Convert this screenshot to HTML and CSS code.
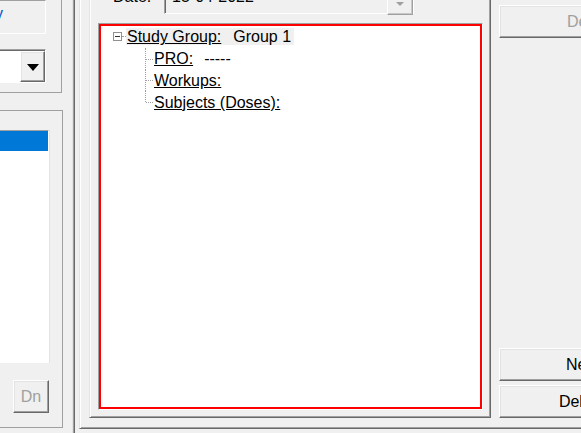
FILE: index.html
```html
<!DOCTYPE html>
<html>
<head>
<meta charset="utf-8">
<title>Study Group</title>
<link rel="stylesheet" href="styles.css">
</head>
<body>
<div class="window">
  <div class="left-pane">
    <div class="group group-top">
      <div class="static"><span class="static-text">y</span></div>
      <div class="combo">
        <div class="combo-field"></div>
        <div class="combo-btn"><span class="arrow-black"></span></div>
      </div>
    </div>
    <div class="group group-list">
      <div class="listbox">
        <div class="list-item selected"></div>
      </div>
      <button class="btn btn-dn" disabled>Dn</button>
    </div>
  </div>
  <div class="splitter"></div>
  <div class="outer-panel">
    <div class="inner-panel">
      <div class="date-row">
        <span class="date-label">Date:</span>
        <div class="date-box">
          <span class="date-value">15-04-2022</span>
          <span class="date-btn"><span class="arrow-gray"></span></span>
        </div>
      </div>
      <div class="tree-frame">
        <div class="tree">
          <div class="tree-row root">
            <span class="expander"></span>
            <span class="h-connector"></span>
            <span class="node selected"><span class="key">Study Group:</span><span class="val">Group 1</span></span>
          </div>
          <div class="tree-row child">
            <span class="branch"></span>
            <span class="node"><span class="key">PRO:</span><span class="val val-child">-----</span></span>
          </div>
          <div class="tree-row child">
            <span class="branch"></span>
            <span class="node"><span class="key">Workups:</span></span>
          </div>
          <div class="tree-row child last">
            <span class="branch"></span>
            <span class="node"><span class="key">Subjects (Doses):</span></span>
          </div>
        </div>
      </div>
    </div>
    <div class="right-col">
      <button class="btn btn-side btn-first" disabled>Details</button>
      <button class="btn btn-side btn-new">New</button>
      <button class="btn btn-side btn-del">Delete</button>
    </div>
  </div>
</div>
</body>
</html>
```
FILE: styles.css
```css
* { box-sizing: border-box; }

html, body {
  margin: 0;
  padding: 0;
  background: #f0f0f0;
  overflow: hidden;
}

body {
  width: 581px;
  height: 433px;
  font-family: "Liberation Sans", Arial, sans-serif;
  font-size: 16px;
  color: #000;
}

.window {
  display: flex;
  align-items: flex-start;
  width: 900px;
  height: 433px;
}

/* ---------- left pane ---------- */
.left-pane {
  width: 72px;
  flex-shrink: 0;
  display: flex;
  flex-direction: column;
}

.group {
  border-color: #a0a0a0;
  border-style: solid;
  border-width: 0;
}

.group-top {
  width: 62px;
  height: 93px;
  border-right-width: 1px;
  border-bottom-width: 1px;
  display: flex;
  flex-direction: column;
}

.static {
  width: 46px;
  height: 34px;
  border-top: 1px solid #a0a0a0;
  border-right: 1px solid #fff;
  border-bottom: 1px solid #fff;
  overflow: hidden;
  padding-top: 4px;
  line-height: 18px;
}

.static-text {
  display: inline-block;
  margin-left: -5px;
  color: #0055cc;
}

.combo {
  margin-top: 15px;
  width: 46px;
  height: 34px;
  display: flex;
  border-top: 1px solid #a0a0a0;
  border-right: 1px solid #fff;
  border-bottom: 1px solid #fff;
  box-shadow: inset 0 1px 0 #696969;
  padding-top: 1px;
}

.combo-field {
  flex: 1;
  background: #fff;
}

.combo-btn {
  width: 25px;
  display: flex;
  align-items: center;
  justify-content: center;
  padding-top: 2px;
  background: #f0f0f0;
  border: 1px solid;
  border-color: #fff #696969 #696969 #fff;
  box-shadow: inset -1px -1px 0 #a0a0a0, inset 1px 1px 0 #e3e3e3;
}

.arrow-black {
  width: 0;
  height: 0;
  border-left: 6px solid transparent;
  border-right: 6px solid transparent;
  border-top: 7px solid #000;
}

.group-list {
  margin-top: 17px;
  width: 63px;
  height: 318px;
  border-top-width: 1px;
  border-right-width: 1px;
  border-bottom-width: 1px;
  display: flex;
  flex-direction: column;
}

.listbox {
  margin-top: 19px;
  width: 49px;
  height: 233px;
  background: #fff;
  border-top: 1px solid #a0a0a0;
  border-right: 1px solid #fff;
  border-bottom: 1px solid #fff;
  box-shadow: 1px 0 0 #e3e3e3;
}

.list-item {
  height: 20px;
}

.list-item.selected {
  background: #0078d7;
}

/* ---------- buttons ---------- */
.btn {
  font-family: "Liberation Sans", Arial, sans-serif;
  font-size: 16px;
  line-height: 18px;
  color: #000;
  background: #f0f0f0;
  border: 1px solid;
  border-color: #fff #696969 #696969 #fff;
  box-shadow: inset -1px -1px 0 #a0a0a0, inset 1px 1px 0 #e3e3e3;
  padding: 0;
  margin: 0;
  display: flex;
  align-items: center;
  justify-content: center;
  white-space: nowrap;
}

.btn:disabled {
  color: #a0a0a0;
}

.btn-dn {
  margin-top: 17px;
  margin-left: 13px;
  width: 36px;
  height: 33px;
}

/* ---------- splitter ---------- */
.splitter {
  flex-shrink: 0;
  width: 3px;
  height: 433px;
  background: #a0a0a0;
  border-left: 1px solid #e3e3e3;
  border-right: 1px solid #696969;
}

/* ---------- right side ---------- */
.outer-panel {
  flex-shrink: 0;
  margin-left: 4px;
  width: 760px;
  height: 429px;
  display: flex;
  align-items: flex-start;
  border-left: 1px solid #e3e3e3;
  border-bottom: 1px solid #696969;
  box-shadow: inset 1px 0 0 #fff, inset 0 -1px 0 #a0a0a0;
  padding-left: 9px;
}

.inner-panel {
  flex-shrink: 0;
  width: 402px;
  height: 418px;
  display: flex;
  flex-direction: column;
  border-left: 1px solid #e3e3e3;
  border-right: 1px solid #696969;
  border-bottom: 1px solid #696969;
  box-shadow: inset 1px 0 0 #fff, inset -1px -1px 0 #a0a0a0;
  padding-left: 1px;
}

.date-row {
  margin-top: -11px;
  height: 25px;
  display: flex;
  align-items: flex-start;
  padding-left: 22px;
  flex-shrink: 0;
}

.date-label {
  width: 51px;
  line-height: 18px;
  margin-top: -1px;
}

.date-box {
  width: 250px;
  height: 25px;
  display: flex;
  border: 1px solid;
  border-color: #a0a0a0 #fff #fff #a0a0a0;
  box-shadow: inset 1px 1px 0 #696969;
}

.date-value {
  flex: 1;
  padding-left: 7px;
  line-height: 18px;
  margin-top: -2px;
}

.date-btn {
  width: 26px;
  height: 26px;
  margin-top: -1px;
  display: flex;
  align-items: flex-end;
  justify-content: center;
  padding-bottom: 8px;
  background: #f0f0f0;
  border: 1px solid;
  border-color: #fff #a0a0a0 #a0a0a0 #fff;
  box-shadow: inset -1px -1px 0 #c8c8c8;
}

.arrow-gray {
  width: 0;
  height: 0;
  border-left: 4px solid transparent;
  border-right: 4px solid transparent;
  border-top: 4px solid #a0a0a0;
}

/* ---------- tree ---------- */
.tree-frame {
  margin-top: 9px;
  margin-left: 7px;
  width: 385px;
  height: 387px;
  border: 1px solid;
  border-color: #a0a0a0 #fff #fff #a0a0a0;
  flex-shrink: 0;
}

.tree {
  height: 100%;
  background: #fff;
  border: 2px solid #ff0000;
}

.tree-row {
  height: 21.8px;
  display: flex;
  align-items: center;
  line-height: 17px;
  white-space: nowrap;
}

.tree-row.root {
  padding-left: 12px;
}

.expander {
  position: relative;
  width: 9px;
  height: 9px;
  border: 1px solid #919191;
  flex-shrink: 0;
}

.expander::after {
  content: "";
  position: absolute;
  left: 1px;
  top: 3px;
  width: 5px;
  height: 1px;
  background: #333;
}

.h-connector {
  width: 4px;
  height: 0;
  border-top: 1px dotted #a0a0a0;
  flex-shrink: 0;
}

.node {
  padding: 0 3px 0 1px;
}

.node.selected {
  background: #f0f0f0;
}

.key {
  text-decoration: underline;
}

.val {
  margin-left: 12px;
}

.val-child {
  margin-left: 11px;
}

.tree-row.child {
  padding-left: 44px;
}

.branch {
  position: relative;
  align-self: stretch;
  width: 8px;
  flex-shrink: 0;
}

.branch::before {
  content: "";
  position: absolute;
  left: 0;
  top: 0;
  bottom: 0;
  border-left: 1px dotted #a0a0a0;
}

.tree-row.last .branch::before {
  bottom: 50%;
}

.branch::after {
  content: "";
  position: absolute;
  left: 1px;
  right: 0;
  top: 50%;
  border-top: 1px dotted #a0a0a0;
}

/* ---------- right column ---------- */
.right-col {
  flex-shrink: 0;
  margin-left: 8px;
  width: 166px;
  height: 418px;
  display: flex;
  flex-direction: column;
}

.btn-side {
  height: 33px;
}

.btn-first {
  margin-top: 5px;
  justify-content: flex-start;
  padding-left: 67px;
}

.btn-new {
  margin-top: auto;
}

.btn-del {
  margin-top: 4px;
}
```
